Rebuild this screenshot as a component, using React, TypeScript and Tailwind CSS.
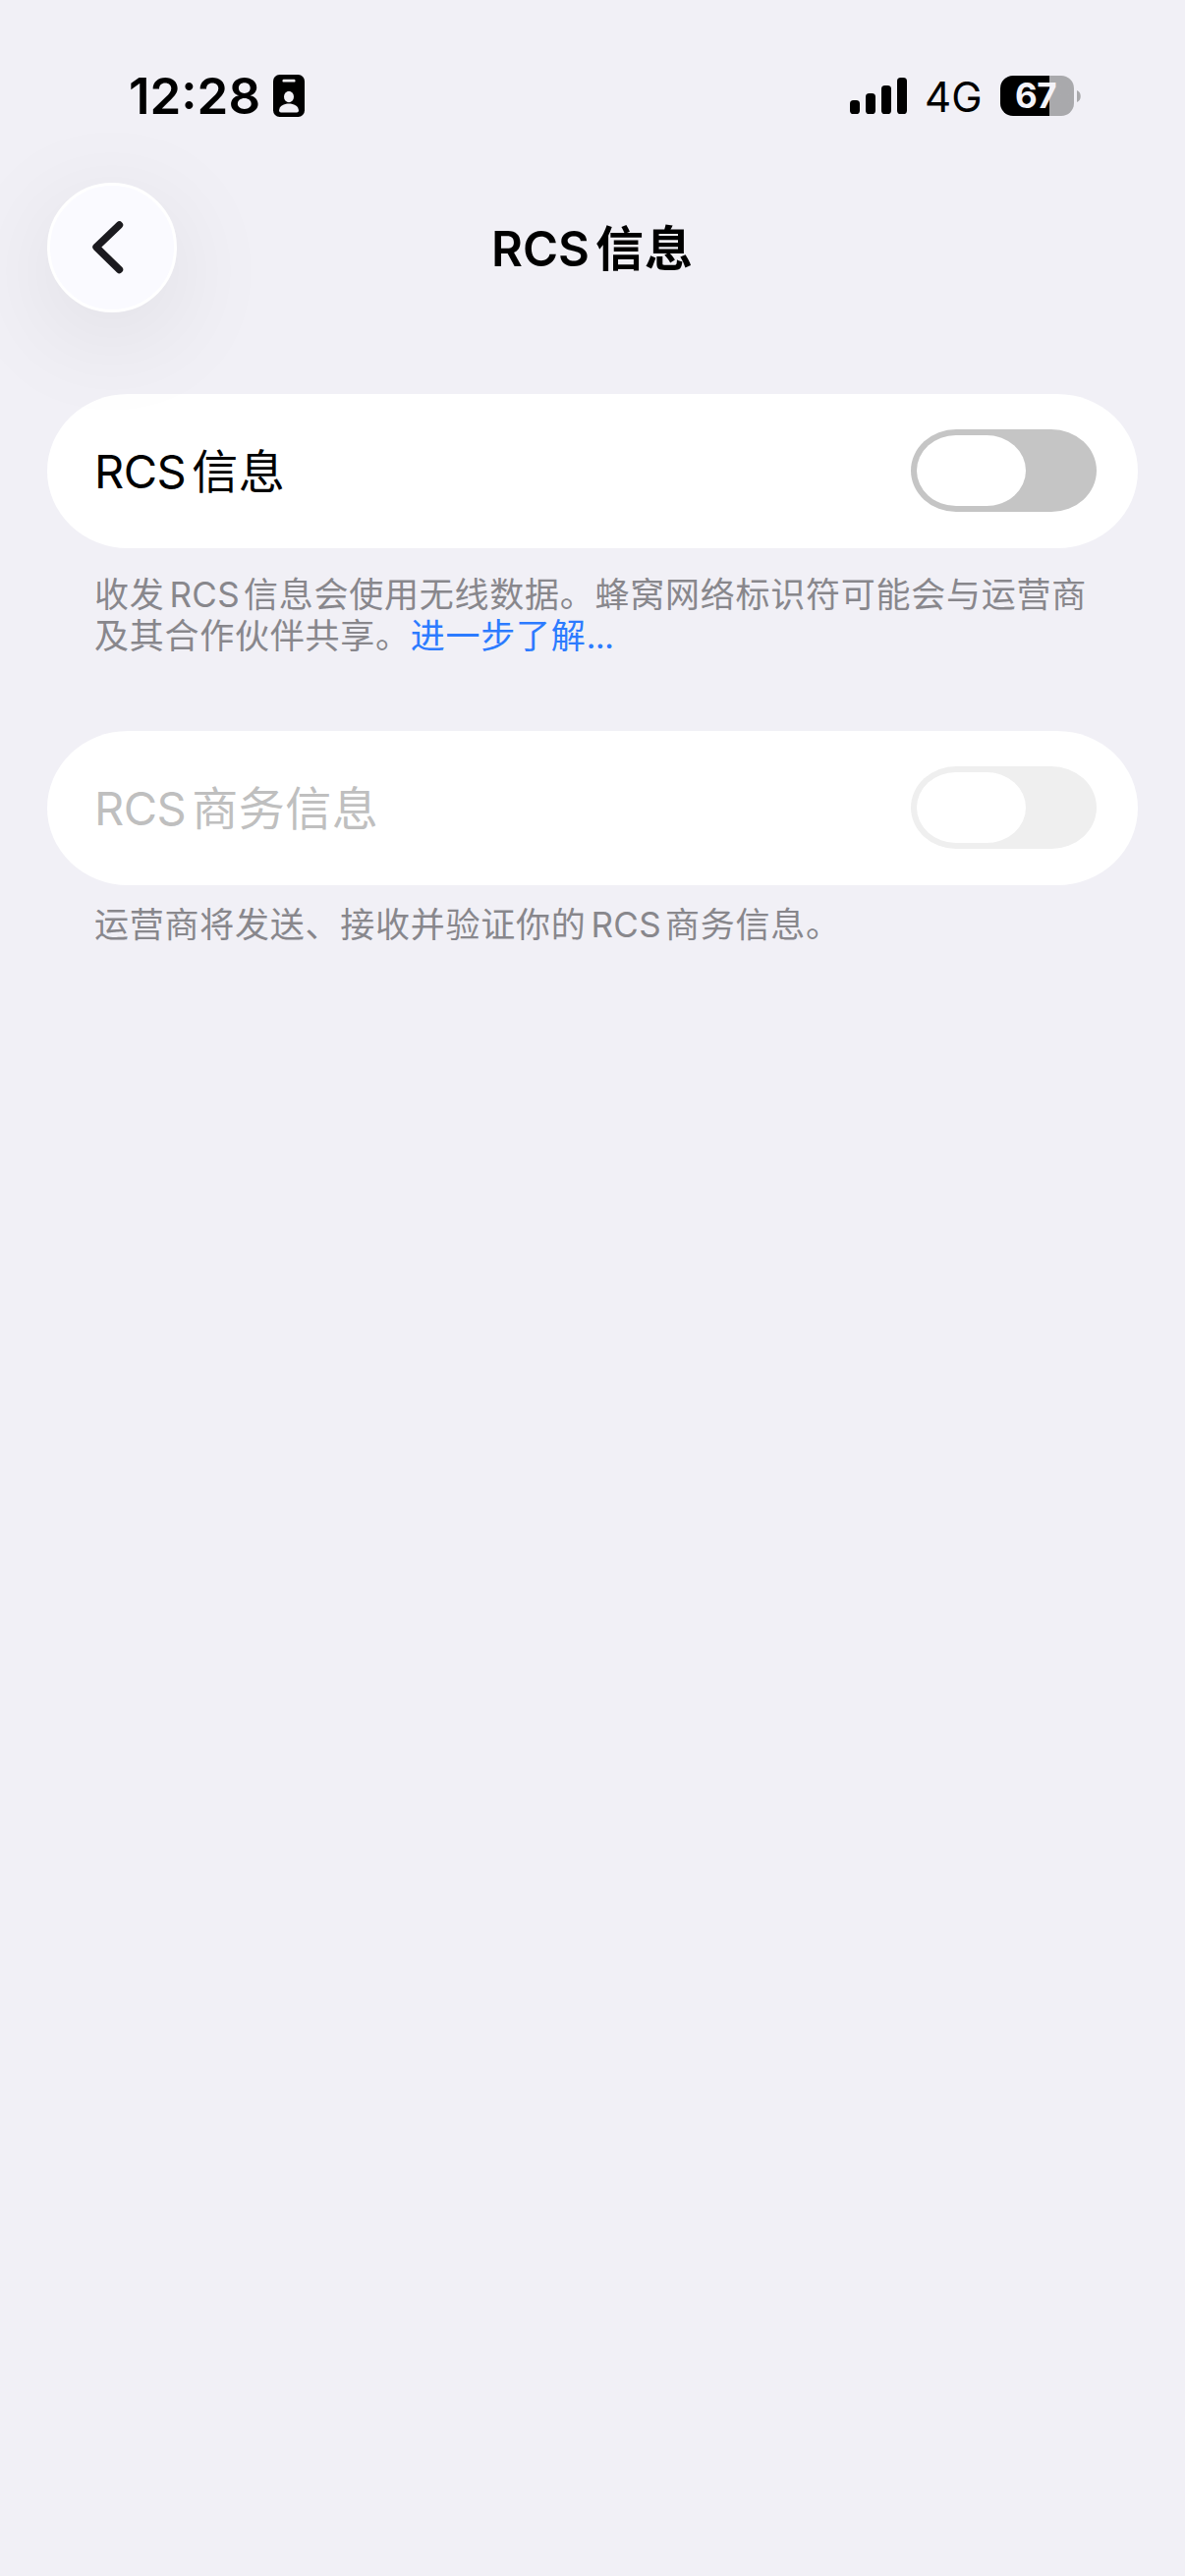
function StatusBar() {
  return (
    <div className="flex h-[156px] items-center pt-[39px] pr-[106px] pl-[131px]">
      <span className="w-[147px] text-[51px] leading-[60px] font-semibold whitespace-nowrap">12:28</span>
      <svg width="32" height="43" viewBox="0 0 32 43">
        <rect width="32" height="43" rx="6.5" fill="#000" />
        <rect x="9.5" y="4.8" width="13" height="2.8" rx="1.2" fill="#f1f0f6" />
        <ellipse cx="16" cy="22.5" rx="5" ry="5.8" fill="#f1f0f6" />
        <path d="M6 36.500C6.500 31.500 11 29.500 16 29.500S25.500 31.500 26 36.500Q26 38.500 24 38.500H8Q6 38.500 6 36.500Z" fill="#f1f0f6" />
      </svg>
      <svg className="ml-auto" width="58" height="37" viewBox="0 0 58 37">
        <rect x="0" y="23" width="10" height="14" rx="3.6" />
        <rect x="16" y="16" width="10" height="21" rx="3.6" />
        <rect x="32" y="8" width="10" height="29" rx="3.6" />
        <rect x="48" y="0" width="10" height="37" rx="3.6" />
      </svg>
      <span className="ml-[18px] w-[59px] pt-[3px] text-[42px] leading-[60px] whitespace-nowrap">4G</span>
      <div className="ml-[18px] flex h-[41px] w-[75px] items-center justify-center rounded-[13px] bg-linear-to-r from-black from-[66.7%] to-[#a9a9ac] to-[66.7%] pr-[3px] text-[35px] leading-[41px] font-bold tracking-[-0.5px] text-[#f4f3f9]">
        67
      </div>
      <svg className="ml-[3px]" width="4" height="12" viewBox="0 0 4 12">
        <path d="M0 0C5 1.500 5 10.500 0 12Z" fill="#a9a9ac" />
      </svg>
    </div>
  );
}

function Header() {
  return (
    <header className="grid h-[192px] grid-cols-[132px_1fr_132px] px-12 pt-[30px]">
      <button className="flex size-[132px] items-center justify-center rounded-full border-[3px] border-white bg-[#fafaff] shadow-[0_24px_110px_rgba(0,0,0,0.085)]">
        <svg width="34" height="56" viewBox="0 0 34 56" fill="none" stroke="#1b1a1f" strokeWidth="7.4" strokeLinecap="round" strokeLinejoin="round" className="-translate-x-[5px]">
          <path d="M29.500 5L6 27.500L29.500 50.500" />
        </svg>
      </button>
      <h1 className="h-[132px] text-center text-[49px] leading-[135px] font-semibold">
        RCS<span className="ml-[6px] tracking-[1px]">信息</span>
      </h1>
    </header>
  );
}

function Toggle({ disabled = false }: { disabled?: boolean }) {
  return (
    <div className={`flex h-[84px] w-[189px] items-center rounded-[46px/42px] p-[6px] ${disabled ? "bg-[#efefef]" : "bg-[#c5c5c5]"}`}>
      <div className="h-[72px] w-[111px] rounded-[40px/36px] bg-white" />
    </div>
  );
}

function Row({ label, disabled = false }: { label: string; disabled?: boolean }) {
  return (
    <div className="mx-12 flex h-[157px] items-start justify-between rounded-[82px/78.5px] bg-white pt-9 pr-[42px] pl-12">
      <span className={`text-[47px] leading-[85px] tracking-[-0.5px] ${disabled ? "text-[#bfbfbf]" : "text-black"}`}>
        RCS<span className="ml-[6px] tracking-[0.5px]">{label}</span>
      </span>
      <Toggle disabled={disabled} />
    </div>
  );
}

export default function App() {
  return (
    <main className="h-[2622px] w-[1206px] overflow-hidden bg-[#f1f0f6] font-['Inter','Noto_Sans_CJK_SC',sans-serif] text-black" lang="zh-CN">
      <StatusBar />
      <Header />
      <section className="pt-[53px]">
        <Row label="信息" />
        <p className="mr-24 ml-[96px] mt-[26px] h-[84px] text-[35px] leading-[42px] tracking-[0.75px] whitespace-nowrap text-[#88878c]">
          收发<span className="mr-[4px] ml-[5px] tracking-[0.3px]">RCS</span>信息会使用无线数据。蜂窝网络标识符可能会与运营商
          <br />
          及其合作伙伴共享。<a className="text-[#2c7bff]">进一步了解<span className="tracking-[-0.8px]">...</span></a>
        </p>
      </section>
      <section className="pt-[76px]">
        <Row label="商务信息" disabled />
        <p className="mr-24 ml-[96px] mt-[19px] h-[42px] text-[35px] leading-[42px] tracking-[0.75px] whitespace-nowrap text-[#88878c]">
          运营商将发送、接收并验证你的<span className="mr-[4px] ml-[5px] tracking-[0.3px]">RCS</span>商务信息。
        </p>
      </section>
    </main>
  );
}
